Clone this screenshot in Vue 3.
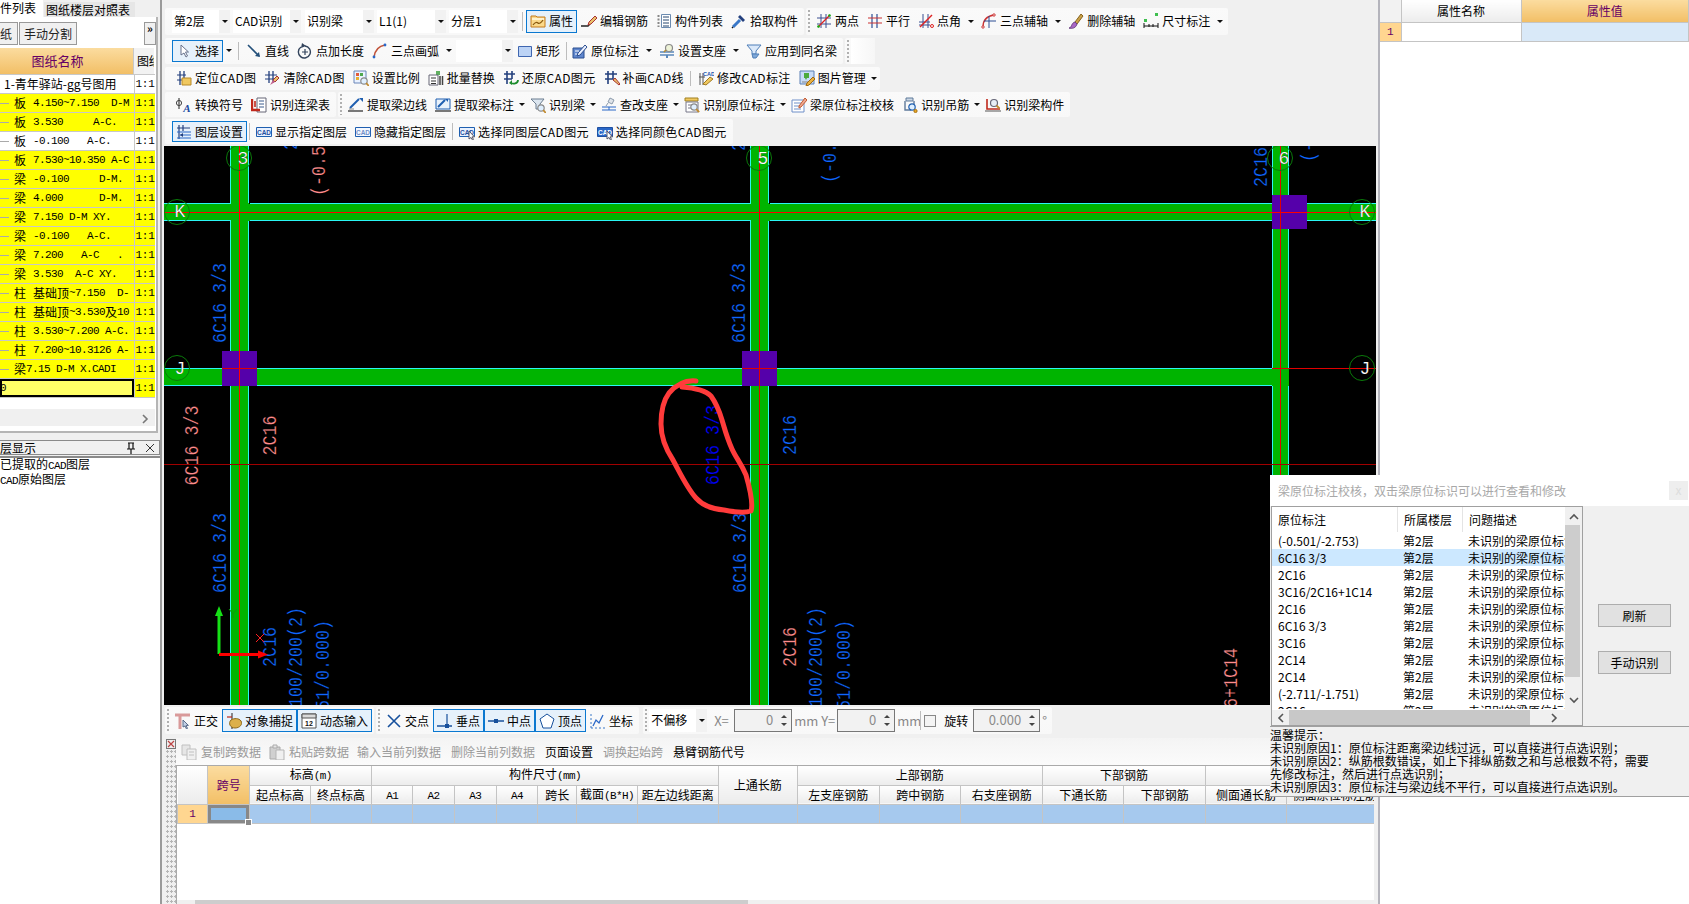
<script setup>
const L = (d, c, w = 1) => `<path d="${d}" fill="none" stroke="${c}" stroke-width="${w}"/>`
const F = (d, f, s = 'none') => `<path d="${d}" fill="${f}" stroke="${s}"/>`
const C = (x, y, r, f, s = 'none', w = 1) => `<circle cx="${x}" cy="${y}" r="${r}" fill="${f}" stroke="${s}" stroke-width="${w}"/>`
const cadBox = (bg, fg, bd) => F('M0.5 3.5h15v9h-15z', bg, bd) + `<text x="8" y="10.5" text-anchor="middle" font-size="6.5" font-weight="700" font-family="Liberation Sans,sans-serif" fill="${fg}">CAD</text>`
const mag = (x = 10, y = 10) => C(x, y, 3.2, '#dfefff', '#8a8a8a', 1.2) + L(`M${x + 2.2} ${y + 2.2}l3 3`, '#c08a30', 1.8)
const icons = {
  attr: F('M1 3h5l1 1h8v10H1z', '#fbd98a', '#c47a1c') + F('M2 5h12v2H2z', '#fff3cf') + L('M3 12c2-3 4-3 5-2s3 0 5-3', '#8a5a10', 1.3),
  edit: L('M0 13h7l2-2', '#222', 1.4) + F('M8 9l6-6 2 2-6 6-3 1z', '#e9c16b', '#a33'),
  list: L('M2.5 2v12', '#888', 2).replace('/>', ' stroke-dasharray="2 1.5"/>') + F('M5.5 1.5h9v13h-9z', '#fff', '#6b8bb0') + L('M7 4h6M7 7h6M7 10h6M7 13h6', '#27476e'),
  pick: L('M2 14l7-7', '#3a78c8', 3) + F('M9 2l5 5-2 2-5-5z', '#24407e') + L('M1 15l1-1', '#111', 1.5),
  two: L('M5 1v14M10 1v14M1 5h14M1 11h14', '#3a4f90') + L('M2 14L14 2', '#d22', 1.3) + C(2.5, 13.5, 1.3, '#1a1') + C(13.5, 2.5, 1.3, '#1a1'),
  par: L('M5 1v14M10 1v14', '#2c4f94', 1.2) + L('M1 5h14M1 10h14', '#c33', 1.2),
  ang: L('M5 1v14M10 1v14M1 9h11M1 12h11', '#3a4f90') + L('M2 14L14 2', '#d22', 1.4) + C(14, 13, 1.5, 'none', '#d22'),
  arc3: L('M2 14C2 7 6 3 13 2', '#c33', 1.4) + L('M8 3v12M3 8h12', '#2c4f94') + C(2, 14, 1.2, '#fff', '#c33') + C(13, 2, 1.2, '#fff', '#c33'),
  del: F('M7 9l6-8 2 2-6 8z', '#c9a24a', '#87631c') + F('M1 15c3 0 2-5 6-6l2 2c-1 4-5 5-8 4z', '#a966c6', '#6a4080'),
  dim: F('M1 6h3v3H1zM12 0h3v3h-3z', '#3fbf4f') + L('M1 10v5M15 10v5M1 13h14', '#111') + L('M6 11v3M10 11v3', '#111'),
  sel: F('M5 2v10l3-2 2 4 1.5-1-2-4h3z', '#fff', '#66708a'),
  line: L('M2 2l11 11', '#24507a', 1.6) + F('M14 14l-5-1 4-4z', '#24507a'),
  len: L('M4 4a6 6 0 1 0 4-1', '#33445c', 1.4) + L('M8 6v6M5 9h6', '#33445c', 1.2) + F('M5 0l4 3-5 2z', '#33445c'),
  arc: L('M2 14C3 7 7 3 13 2', '#c2543a', 1.6) + C(2, 14, 1.4, '#2a68c8') + C(13, 2, 1.4, '#2a68c8'),
  rect: F('M1.5 3.5h13v10h-13z', '#bcd3f5', '#3f66b0'),
  orig: F('M1 5h11v10H1z', '#5f86cd', '#2b4e90') + F('M6 10l7-8 2 2-7 8-3 1z', '#eaf0ff', '#2b4e90') + L('M3 8h4M3 11h2', '#fff'),
  sup: L('M1 9h14M1 12h14', '#5a88bb', 1.5) + L('M8 12v3', '#5a88bb', 2) + C(10, 5, 3.5, '#eef3d8', '#8a8a8a', 1.2) + L('M7 7l-2 2', '#b58a30', 1.6),
  same: F('M1 2h14l-5 6v3H6V8z', '#dbe9fa', '#4f7fb8') + F('M6 11h7l-3 4H7z', '#7fa8d8', '#4f7fb8'),
  locate: L('M4 1v14M8 1v14', '#24407e', 1.3) + L('M1 5h9M1 10h9', '#24407e') + F('M6 8h9v7H6z', '#f0c860', '#b88a28'),
  clear: L('M5 1v12M9 1v12', '#24407e', 1.3) + L('M1 5h12M1 9h12', '#24407e') + F('M9 10l4-4 2 2-4 4z', '#e9c16b', '#a33') + F('M6 15l3-5 2 2z', '#c0608c'),
  scale: F('M1 1h12v12H1z', '#eaf2ff', '#6a86b8') + F('M3 3h3v3H3z', '#e25c3c') + F('M7 3h3v3H7z', '#50a850') + F('M3 7h3v3H3z', '#e8b030') + mag(11, 11),
  batch: F('M8 1h4v4H8z', '#60b060') + F('M1 5h9v10H1z', '#fff', '#667') + L('M3 8h5M3 11h5M3 13.5h5', '#333') + L('M12 6v9M14.5 6v9', '#444', 1.5),
  restore: L('M4 1v13M9 1v8', '#24407e', 1.6) + L('M1 4h11M1 9h8', '#24407e', 1.3) + L('M15 10c0 4-5 4-7 3', '#1c8c2c', 1.8) + F('M6 13l3-3v5z', '#1c8c2c'),
  repair: L('M4 1v13M9 1v8', '#24407e', 1.6) + L('M1 4h12M1 9h8', '#24407e', 1.3) + F('M9 10l2-2 5 6-1 1z', '#e9c16b', '#a33'),
  modcad: L('M2 3v12M5 3v12', '#555') + L('M1 7h6', '#555') + `<text x="11" y="6" text-anchor="middle" font-size="5.5" font-weight="700" font-family="Liberation Sans,sans-serif" fill="#1a56b0">CAD</text>` + F('M5 14l7-7 3 2-7 6z', '#f0c860', '#a07a20'),
  image: F('M1 1h14v13H1z', '#c9dcf7', '#5c80b5') + F('M5 3h5v5H8l-1 2-1-2H5z', '#4caa3c') + L('M3 12h7', '#888') + F('M8 13l6-6 2 2-6 6-3 1z', '#e9b040', '#a06a10'),
  conv: L('M3 1v11', '#444', 1.2) + C(3, 6, 2.6, 'none', '#444') + `<text x="11" y="15" text-anchor="middle" font-size="11" font-style="italic" font-weight="700" font-family="Liberation Serif,serif" fill="#1c4aa0">A</text>`,
  lian: F('M6 1h9v14H6z', '#fff', '#667') + L('M8 4h5M8 7h5M8 10h5', '#3a5a8c') + L('M1 2v11h8', '#c0281c', 2.4) + L('M4 4v6', '#c0281c', 1.6),
  edge: L('M0 14h15', '#222', 1.2) + L('M2 11l9-9', '#1f5fb0', 2) + F('M11 1h4v4z', '#1f5fb0') + L('M1 12h5', '#888'),
  mark: F('M1 2h14v10H1z', '#eaf2fb', '#1f5fb0') + L('M3 10l7-7', '#1f5fb0', 2) + L('M0 14h16', '#222', 1.2) + F('M10 2h3v3z', '#1f5fb0'),
  beam: F('M1 2h13l-4 5v5H6V7z', '#dce6f0', '#6b7d90') + mag(11, 11),
  check: F('M9 1l4 2-2 4-4-2z', '#dfe4ea', '#8a99aa') + L('M7 6l-2 3', '#8a99aa') + L('M1 10h14M1 13h14', '#2a68c8', 1.2) + L('M8 10v3', '#2a68c8'),
  yuan: F('M1 1h13v3H1z', '#f0c860', '#a08020') + F('M2 5h12v10H2z', '#fff', '#778') + L('M4 8h5M4 11h3', '#778') + mag(10, 10),
  verify: F('M1 3h12v12H1z', '#fff', '#6f8fc8') + L('M3 6h7M3 9h7M3 12h7', '#6f8fc8') + F('M8 9l6-8 2 2-6 7-2 1z', '#f0a890', '#c05a30'),
  hang: F('M4 1h7v3H4z', '#cbd7e5', '#5f7a9a') + L('M3 4v9h6M12 4v3', '#5f7a9a', 1.4) + C(10, 10, 3.2, '#dff0ff', '#1f5fb0', 1.2) + C(13.5, 14, 1.6, '#e8a820', '#a87010'),
  shape: L('M2 2v10h13', '#c0281c', 1.6) + L('M0 14h16', '#555') + C(9, 6, 3.5, '#e8eef5', '#667', 1.2) + L('M11.5 8.5l3 3', '#c08a30', 1.8),
  layer: L('M3 1v14M7 1v6', '#24407e', 1.2) + L('M1 4h13', '#24407e') + L('M1 8h14M4 11h11M1 14h14', '#2a68c8', 1.2) + F('M7 9l-3 2 3 2z', '#24407e'),
  show: cadBox('#e8f1ff', '#1f4fa0', '#1f5fb0'),
  hide: cadBox('#f4f8ff', '#6f8fc8', '#1f5fb0'),
  sameL: cadBox('#e8f1ff', '#1f4fa0', '#1f5fb0') + F('M10 7v8l2-1.5 1.5 2.5 1-.6-1.5-2.5h2.5z', '#fff', '#556'),
  sameC: cadBox('#2a68c8', '#fff', '#1f4fa0') + F('M10 7v8l2-1.5 1.5 2.5 1-.6-1.5-2.5h2.5z', '#fff', '#556'),
  ortho: L('M0 2h15', '#d99a9a', 3) + L('M5 2v14', '#d99a9a', 3) + F('M8 7v7l2-1 1.5 3 1-.6-1.5-3h2.4z', '#c4d2e8', '#5a6a88'),
  snap: L('M6 0v16', '#444', 1.2) + L('M1 4h5', '#c0281c', 1.2) + F('M5 7c3-2 8-2 10 1s-1 7-6 7-7-5-4-8z', '#dcb04a', '#8e6a1e'),
  input: F('M1 1h14v14H1z', '#fff', '#555') + F('M1 1h14v4H1z', '#d9d9d9', '#555') + `<text x="8" y="13" text-anchor="middle" font-size="7" font-weight="700" font-family="Liberation Sans,sans-serif" fill="#111">12</text>`,
  cross: L('M2 2l12 12M14 2L2 14', '#17509c', 1.6),
  foot: L('M0 13h15', '#17509c', 1.5) + L('M10 1v12', '#17509c', 1.2) + F('M8 11h4v4H8z', '#17509c'),
  mid: L('M0 8h16', '#17509c', 1.5) + F('M6 6h4v4H6z', '#17509c'),
  vert: F('M8 1l7 5-3 9H4L1 6z', '#fff', '#17509c'),
  coord: L('M1 15V1M1 15h14', '#3a78c8').replace('/>', ' stroke-dasharray="2 2"/>') + L('M3 13l3-6 3 3 4-8', '#2a68c8', 1.3),
  copy: F('M1 1h8v10H1z', '#e6e6e6', '#c0c0c0') + F('M6 5h9v11H6z', '#f0f0f0', '#c0c0c0') + L('M8 8h5M8 11h5', '#c0c0c0'),
  paste: F('M1 3h10v12H1z', '#d0d0d0', '#aaa') + F('M4 1h4v3H4z', '#e6e6e6', '#aaa') + F('M7 6h8v10H7z', '#f0f0f0', '#b5b5b5')
}
const b = (ic, t, o = {}) => ({ k: 'b', ic, t, ...o })
const sel = (t, w) => ({ k: 's', t, w })
const sep = (w = 7) => ({ k: 'p', w })
const grip = { k: 'g' }
const rows = [
  [
    { pl: 7, items: [sel('第2层', 58), { k: 'x', w: 3 }, sel('CAD识别', 68), { k: 'x', w: 4 }, sel('识别梁', 69), { k: 'x', w: 3 }, sel('L1(1)', 69), { k: 'x', w: 3 }, sel('分层1', 69), sep(8), b('attr', '属性', { on: 1 }), b('edit', '编辑钢筋'), b('list', '构件列表'), b('pick', '拾取构件')] },
    { pl: 1, items: [grip, b('two', '两点'), b('par', '平行'), b('ang', '点角', { a: 12 }), b('arc3', '三点辅轴', { a: 12 }), b('del', '删除辅轴'), b('dim', '尺寸标注', { a: 12 })] }
  ],
  [
    { pl: 7, items: [b('sel', '选择', { on: 1, a: 12 }), sep(7), b('line', '直线'), b('len', '点加长度'), b('arc', '三点画弧', { a: 12 }), { k: 'x', w: 1 }, sel('', 57), b('rect', '矩形'), sep(4), b('orig', '原位标注', { a: 12 }), b('sup', '设置支座', { a: 12 }), b('same', '应用到同名梁')] },
    { pl: 1, blank: 1, items: [grip] }
  ],
  [
    { pl: 7, items: [b('locate', '定位CAD图'), b('clear', '清除CAD图'), b('scale', '设置比例'), b('batch', '批量替换'), b('restore', '还原CAD图元'), b('repair', '补画CAD线'), sep(6), b('modcad', '修改CAD标注'), b('image', '图片管理', { a: 8 })] }
  ],
  [
    { pl: 7, items: [b('conv', '转换符号'), b('lian', '识别连梁表')] },
    { pl: 1, items: [grip, b('edge', '提取梁边线'), b('mark', '提取梁标注', { a: 8 }), b('beam', '识别梁', { a: 8 }), b('check', '查改支座', { a: 8 }), b('yuan', '识别原位标注', { a: 8 }), b('verify', '梁原位标注校核'), b('hang', '识别吊筋', { a: 8 }), b('shape', '识别梁构件')] }
  ],
  [
    { pl: 7, items: [b('layer', '图层设置', { on: 1 }), sep(5), b('show', '显示指定图层'), b('hide', '隐藏指定图层'), sep(5), b('sameL', '选择同图层CAD图元'), b('sameC', '选择同颜色CAD图元')] }
  ]
]
const snapStrips = [
  { pl: 1, items: [grip, b('ortho', '正交'), b('snap', '对象捕捉', { on: 1 }), b('input', '动态输入', { on: 1 })] },
  { pl: 1, items: [grip, b('cross', '交点'), b('foot', '垂点', { on: 1 }), b('mid', '中点', { on: 1 }), b('vert', '顶点', { on: 1 }), b('coord', '坐标')] },
  { pl: 1, items: [grip, sel('不偏移', 58), { k: 'l', t: 'X=', w: 27, pad: 1 }, { k: 'n', t: '0', w: 58 }, { k: 'l', t: 'mm', w: 27 }, { k: 'l', t: 'Y=', w: 18 }, { k: 'n', t: '0', w: 58 }, { k: 'l', t: 'mm', w: 25 }, { k: 'c' }, { k: 'l', t: '旋转', w: 37, dark: 1 }, { k: 'n', t: '0.000', w: 67 }, { k: 'l', t: '°', w: 10 }] }
]
const layerTree = [
  ['板', '4.150~7.150  D-M', 1], ['板', '3.530     A-C.', 1], ['板', '-0.100   A-C.', 0], ['板', '7.530~10.350 A-C', 1],
  ['梁', '-0.100     D-M.', 1], ['梁', '4.000      D-M.', 1], ['梁', '7.150 D-M XY.', 1], ['梁', '-0.100   A-C.', 1],
  ['梁', '7.200   A-C   .', 1], ['梁', '3.530  A-C XY.', 1], ['柱', '基础顶~7.150  D-', 1], ['柱', '基础顶~3.530及10', 1],
  ['柱', '3.530~7.200 A-C.', 1], ['柱', '7.200~10.3126 A-', 1], ['梁', '7.15 D-M X.CADI', 1, 1]
]
const parts = (s) => s.split(/([\u4e00-\u9fa5]+)/).filter(Boolean)
const isZh = (s) => /[\u4e00-\u9fa5]/.test(s)
const hasCad = (s) => s.includes('CAD')
const colW = [30, 42, 60, 61, 41, 41, 42, 41, 39, 60, 81, 78, 82, 81, 81, 81, 81, 81, 95]
const sub1 = ['起点标高', '终点标高', 'A1', 'A2', 'A3', 'A4', '跨长', '截面(B*H)', '距左边线距离']
const sub2 = ['左支座钢筋', '跨中钢筋', '右支座钢筋', '下通长筋', '下部钢筋', '侧面通长筋', '侧面原位标注筋']
const dlgRows = ['(-0.501/-2.753)', '6C16 3/3', '2C16', '3C16/2C16+1C14', '2C16', '6C16 3/3', '3C16', '2C14', '2C14', '(-2.711/-1.751)', '2C16']
const hints = ['温馨提示：', '未识别原因1：原位标注距离梁边线过远，可以直接进行点选识别；', '未识别原因2：纵筋根数错误，如上下排纵筋数之和与总根数不符，需要', '先修改标注，然后进行点选识别；', '未识别原因3：原位标注与梁边线不平行，可以直接进行点选识别。']
const blue = '#0f66ff'
const red = '#ff8c8c'
const cadTexts = [
  ['6C16 3/3', 226, 343, blue], ['6C16 3/3', 226, 593, blue], ['6C16 3/3', 745, 343, blue], ['6C16 3/3', 746, 593, blue],
  ['2C16', 275.6, 667, blue], ['2C16', 796, 455, blue], ['2C16', 1267, 187, blue], ['2C16', 297, 150, blue], ['2C16', 745, 151, blue],
  ['100/200(2)', 301.6, 707, blue], ['51/0.000)', 329, 710, blue], ['100/200(2)', 822, 707, blue], ['51/0.000)', 850, 710, blue],
  ['(-0.501/-2.753)', 836, 183, blue], ['(-2.711/-1.751)', 1315, 162, blue],
  ['(-0.501/-2.753)', 324.5, 196, red], ['6C16 3/3', 198, 485.5, red], ['2C16', 275.6, 455.6, red], ['2C16', 795.5, 667, red],
  ['3C16/2C16+1C14', 1236.5, 788, red], ['6C16 3/3', 719, 485, '#0000ff']
]
const bubbles = [[239, 158, '3', 243, 159], [759, 158, '5', 763, 159], [1280, 158, '6', 1284, 159], [177, 212, 'K', 180, 212], [1362, 212, 'K', 1365, 212], [177, 368, 'J', 180, 369], [1362, 368, 'J', 1365, 369]]
const greens = [[164, 203.5, 1212, 17], [164, 368.5, 1125, 17], [231, 146, 18, 559], [751, 146, 18, 559], [1272, 146, 17, 559]]
const purples = [[222, 351, 35, 35], [742, 351, 35, 35], [1272, 195, 35, 34]]
const cyan = 'M164 203.5H230.5M249.5 203.5H750.5M769.5 203.5H1272M1307 203.5H1376M164 220.5H230.5M249.5 220.5H750.5M769.5 220.5H1272M1307 220.5H1376M164 368.5H222M257 368.5H742M777 368.5H1272M164 385.5H222M257 385.5H742M777 385.5H1272M230.5 146V203M230.5 221V351M230.5 386V705M248.5 146V203M248.5 221V351M248.5 386V705M750.5 146V203M750.5 221V351M750.5 386V705M768.5 146V203M768.5 221V351M768.5 386V705M1272.5 146V195M1272.5 229V368M1272.5 386V705M1288.5 146V195M1288.5 229V368M1288.5 386V705'
const scribble = 'M696 381C686 380 677 384 669 393C663 401 661 412 661 424C661 437 665 448 673 460C680 473 687 488 696 498C703 506 712 509 724 510C734 512 745 513 751 511C753 505 752 496 746 475C741 463 736 458 732 449C727 438 725 430 722 420C719 410 716 403 711 396C705 390 695 388 682 387'
</script>

<template>
  <div class="app">
    <aside class="left">
      <div class="tabs">
        <span class="tab on">件列表</span>
        <span class="tab">图纸楼层对照表</span>
      </div>
      <div class="leftPanel">
        <div class="leftBtns">
          <span class="lbtn first">纸</span>
          <span class="lbtn">手动分割</span>
          <span class="more">»</span>
        </div>
        <div class="ltable">
          <div class="lrow lhead">
            <span class="c1 orange">图纸名称</span>
            <span class="c2 clip">图纸</span>
          </div>
          <div class="lrow">
            <span class="c1 rowtext white"><i class="indent0"></i><span class="zh">1-青年驿站-gg号图用</span></span>
            <span class="c2 white">1:1</span>
          </div>
          <div v-for="(r, i) in layerTree" :key="i" class="lrow">
            <span class="c1 rowtext" :class="r[2] ? 'yellow' : 'white'">
              <i class="dash"></i><span class="zh tkind" :class="{ tight: r[3] }">{{ r[0] }}</span>
              <template v-for="(p, j) in parts(r[1])" :key="j"><span :class="isZh(p) ? 'zh' : 'mono'">{{ p }}</span></template>
            </span>
            <span class="c2" :class="r[2] ? 'yellow' : 'white'">1:1</span>
          </div>
          <div class="lrow">
            <span class="c1 rowtext selrow"><span class="mono">0</span></span>
            <span class="c2 yellow">1:1</span>
          </div>
          <div class="lscroll"><svg width="10" height="10" viewBox="0 0 10 10"><path d="M3 1l4 4-4 4" fill="none" stroke="#777" stroke-width="1.6"/></svg></div>
        </div>
      </div>
      <div class="layerHead">
        <span>层显示</span>
        <span class="hicons">
          <svg width="10" height="12" viewBox="0 0 10 12"><path d="M2 1h6M3 1v6h4V1M1 7h8M5 7v5" fill="none" stroke="#111" stroke-width="1.2"/></svg>
          <svg width="10" height="10" viewBox="0 0 10 10"><path d="M1 1l8 8M9 1l-8 8" stroke="#333"/></svg>
        </span>
      </div>
      <div class="layerBody">
        <div class="lline">已提取的<span class="mono">CAD</span>图层</div>
        <div class="lline"><span class="mono">CAD</span>原始图层</div>
      </div>
    </aside>

    <main class="center">
      <div class="toolbars">
        <div v-for="(row, ri) in rows" :key="ri" class="row">
          <div v-for="(s, si) in row" :key="si" class="strip" :style="{ paddingLeft: s.pl + 'px' }">
            <template v-for="(it, ii) in s.items" :key="ii">
              <span v-if="it.k === 'x'" :style="{ width: it.w + 'px' }"></span>
              <span v-else-if="it.k === 'g'" class="grip"></span>
              <span v-else-if="it.k === 'p'" class="sepw" :style="{ width: it.w + 'px' }"><i></i></span>
              <span v-else-if="it.k === 's'" class="combo" :style="{ width: it.w + 'px' }"><em>{{ it.t }}</em><b class="drop"><u class="tri"></u></b></span>
              <template v-else>
                <span class="btn" :class="{ on: it.on }">
                  <svg class="ic" viewBox="0 0 16 16" v-html="icons[it.ic]"></svg>
                  <span :class="{ cadw: hasCad(it.t) }">{{ it.t }}</span>
                </span>
                <span v-if="it.a" class="arrow" :style="{ width: it.a + 'px' }"><u class="tri"></u></span>
              </template>
            </template>
            <span v-if="s.blank" class="blank"></span>
          </div>
        </div>
      </div>

      <div class="canvas">
        <svg width="1212" height="559" viewBox="164 146 1212 559">
          <rect x="164" y="146" width="1212" height="559" fill="#000" />
          <g shape-rendering="crispEdges">
            <rect v-for="(g, i) in greens" :key="i" :x="g[0]" :y="g[1]" :width="g[2]" :height="g[3]" fill="#00b400" />
            <path :d="cyan" fill="none" stroke="#2af5f5" />
          </g>
          <text v-for="(t, i) in cadTexts" :key="'t' + i" class="cad" :fill="t[3]" :textLength="t[0].length * 10" lengthAdjust="spacingAndGlyphs" :transform="`translate(${t[1]} ${t[2]}) rotate(-90)`">{{ t[0] }}</text>
          <g shape-rendering="crispEdges">
            <rect v-for="(p, i) in purples" :key="'p' + i" :x="p[0]" :y="p[1]" :width="p[2]" :height="p[3]" fill="#5500aa" />
            <path d="M164 212.5H1376M239.5 146V705" stroke="#ff0000" fill="none" />
            <path d="M759.5 146V705M1280.5 146V705M222 368.5H257M742 368.5H777M1272 368.5H1376" stroke="#e00000" fill="none" />
            <path d="M164 464.5H1376" stroke="#a00000" fill="none" />
          </g>
          <g v-for="(c, i) in bubbles" :key="'b' + i">
            <circle :cx="c[0]" :cy="c[1]" r="12.5" fill="none" stroke="#0a7a0a" />
            <text class="axis" :x="c[3]" :y="c[4]" text-anchor="middle" dominant-baseline="central">{{ c[2] }}</text>
          </g>
          <path :d="scribble" fill="none" stroke="#ff3b3b" stroke-width="5" stroke-linecap="round" stroke-linejoin="round" />
          <path d="M219 654V616" stroke="#16e016" stroke-width="3" />
          <path d="M219 606l-4 10h8z" fill="#16e016" />
          <path d="M219 654.5H258" stroke="#ff0000" stroke-width="3" />
          <path d="M268 654.5l-10-4v8z" fill="#ff0000" />
          <path d="M229 609l4 5v4M237 609l-4 5" stroke="#0d9a0d" fill="none" />
          <path d="M256 634l8 8M264 634l-8 8" stroke="#ff2020" fill="none" />
        </svg>
      </div>

      <div class="snapbar">
        <div v-for="(s, si) in snapStrips" :key="si" class="strip" :style="{ paddingLeft: s.pl + 'px' }">
          <template v-for="(it, ii) in s.items" :key="ii">
            <span v-if="it.k === 'g'" class="grip"></span>
            <span v-else-if="it.k === 's'" class="combo" :style="{ width: it.w + 'px' }"><em>{{ it.t }}</em><b class="drop"><u class="tri"></u></b></span>
            <span v-else-if="it.k === 'l'" class="lbl" :class="{ dark: it.dark, pad: it.pad }" :style="{ width: it.w + 'px' }">{{ it.t }}</span>
            <span v-else-if="it.k === 'n'" class="num" :style="{ width: it.w + 'px' }">
              <em>{{ it.t }}</em>
              <span class="spin"><u class="up"></u><u class="dn"></u></span>
            </span>
            <span v-else-if="it.k === 'c'" class="cbwrap"><i class="cb"></i></span>
            <span v-else class="btn" :class="{ on: it.on }">
              <svg class="ic" viewBox="0 0 16 16" v-html="icons[it.ic]"></svg>
              <span>{{ it.t }}</span>
            </span>
          </template>
        </div>
      </div>

      <div class="bottom">
        <div class="gutter">
          <svg width="10" height="10" viewBox="0 0 10 10"><rect x=".5" y=".5" width="9" height="9" fill="#eee" stroke="#777" /><path d="M2 2l6 6M8 2l-6 6" stroke="#b44" stroke-width="1.2" /></svg>
          <div class="dots"></div>
        </div>
        <div class="gridArea">
          <div class="gridBar">
            <span class="gi dis"><svg class="ic" viewBox="0 0 16 16" v-html="icons.copy"></svg>复制跨数据</span>
            <span class="gi dis"><svg class="ic" viewBox="0 0 16 16" v-html="icons.paste"></svg>粘贴跨数据</span>
            <span class="gi dis">输入当前列数据</span>
            <span class="gi dis">删除当前列数据</span>
            <span class="gi">页面设置</span>
            <span class="gi dis">调换起始跨</span>
            <span class="gi">悬臂钢筋代号</span>
          </div>
          <div class="gridWrap">
            <table class="grid">
              <colgroup><col v-for="(w, i) in colW" :key="i" :style="{ width: w + 'px' }"></colgroup>
              <tbody>
                <tr>
                  <th rowspan="2"></th>
                  <th rowspan="2" class="kuahao">跨号</th>
                  <th colspan="2">标高<span class="mono">(m)</span></th>
                  <th colspan="7">构件尺寸<span class="mono">(mm)</span></th>
                  <th rowspan="2">上通长筋</th>
                  <th colspan="3">上部钢筋</th>
                  <th colspan="2">下部钢筋</th>
                  <th colspan="2"></th>
                </tr>
                <tr>
                  <th v-for="t in sub1" :key="t"><template v-for="(p, j) in parts(t)" :key="j"><span :class="isZh(p) ? '' : 'mono'">{{ p }}</span></template></th>
                  <th v-for="t in sub2" :key="t">{{ t }}</th>
                </tr>
                <tr class="data">
                  <td class="rh">1</td>
                  <td class="cur"><i></i></td>
                  <td v-for="n in 17" :key="n"></td>
                </tr>
              </tbody>
            </table>
            <div class="hbar"><i></i></div>
          </div>
        </div>
      </div>
    </main>

    <section class="right">
      <table class="pgrid">
        <colgroup><col class="p0"><col class="p1"><col></colgroup>
        <tbody>
          <tr><th></th><th>属性名称</th><th class="kuahao">属性值</th></tr>
          <tr><td class="rh">1</td><td></td><td class="pval"></td></tr>
        </tbody>
      </table>
    </section>

    <div class="dialog">
      <div class="dtitle">
        <span>梁原位标注校核，双击梁原位标识可以进行查看和修改</span>
        <span class="dclose">x</span>
      </div>
      <div class="dbody">
        <div class="dlist">
          <div class="dmain">
            <div class="dhead"><span class="d1">原位标注</span><span class="d2">所属楼层</span><span class="d3">问题描述</span></div>
            <div class="drows">
              <div v-for="(r, i) in dlgRows" :key="i" class="drow" :class="{ picked: i === 1 }">
                <span class="d1">{{ r }}</span><span class="d2">第2层</span><span class="d3">未识别的梁原位标注</span>
              </div>
            </div>
          </div>
          <div class="vsb">
            <svg width="10" height="8" viewBox="0 0 10 8"><path d="M1 6l4-4 4 4" fill="none" stroke="#555" stroke-width="1.6" /></svg>
            <i></i>
            <svg width="10" height="8" viewBox="0 0 10 8"><path d="M1 2l4 4 4-4" fill="none" stroke="#555" stroke-width="1.6" /></svg>
          </div>
          <div class="hsb">
            <svg width="8" height="10" viewBox="0 0 8 10"><path d="M6 1L2 5l4 4" fill="none" stroke="#555" stroke-width="1.6" /></svg>
            <i></i>
            <svg width="8" height="10" viewBox="0 0 8 10"><path d="M2 1l4 4-4 4" fill="none" stroke="#555" stroke-width="1.6" /></svg>
          </div>
        </div>
        <div class="dside">
          <button class="dbtn">刷新</button>
          <button class="dbtn">手动识别</button>
        </div>
      </div>
      <div class="dhint"><div v-for="h in hints" :key="h">{{ h }}</div></div>
    </div>
  </div>
</template>

<style>
html, body { margin: 0; padding: 0; background: #f0f0f0; overflow: hidden; }
</style>

<style scoped>
.app { position: relative; width: 1689px; height: 904px; display: flex; overflow: hidden; background: #f0f0f0; font: 12px/14px "Noto Sans CJK SC", sans-serif; color: #000; }
i, em, u, b { font-style: normal; text-decoration: none; font-weight: normal; }
.left { width: 162px; flex: none; box-sizing: border-box; display: flex; flex-direction: column; border-right: 2px solid #9a9a9a; }
.tabs { height: 17px; display: flex; align-items: flex-end; }
.tab { height: 15px; width: 91px; margin-left: 1px; padding-left: 2px; background: #e6e6e6; text-align: left; box-sizing: border-box; font-size: 12px; line-height: 15px; white-space: nowrap; overflow: hidden; }
.tab.on { width: 43px; height: 17px; margin: 0; padding: 0; background: #fff; }
.leftPanel { width: 158px; height: 416px; box-sizing: border-box; background: #fff; border-right: 2px solid #b5b5b5; border-bottom: 2px solid #b5b5b5; position: relative; }
.leftBtns { height: 31px; display: flex; padding-top: 5px; box-sizing: border-box; }
.lbtn { height: 23px; width: 58px; line-height: 22px; text-align: center; background: #f0f0f0; border: 1px solid #999; box-sizing: border-box; color: #222; }
.lbtn.first { width: 18px; margin-right: 1px; border-left: 0; text-align: left; }
.more { position: absolute; left: 144px; top: 5px; width: 12px; height: 23px; background: #f0f0f0; border: 1px solid #999; box-sizing: border-box; font-size: 11px; line-height: 11px; text-align: center; font-weight: 700; }
.ltable { width: 155px; }
.lrow { display: flex; height: 19px; border-bottom: 1px solid #c8c8c8; box-sizing: border-box; }
.lhead { height: 27px; }
.c1 { width: 134px; flex: none; border-right: 1px solid #c8c8c8; white-space: pre; overflow: hidden; display: flex; align-items: center; }
.c2 { width: 20px; flex: none; overflow: hidden; white-space: nowrap; text-align: center; line-height: 18px; font-family: "Liberation Mono", monospace; font-size: 11px; letter-spacing: -.3px; }
.clip { font-family: "Noto Sans CJK SC", sans-serif; font-size: 12px; line-height: 26px; text-align: left; padding-left: 3px; box-sizing: border-box; background: #f2f2f2; }
.orange { background: linear-gradient(#fbdc9f, #f2bf66); color: #660066; justify-content: center; padding-right: 18px; box-sizing: border-box; font-size: 13px; }
.white { background: #fff; }
.yellow { background: #ffff00; }
.zh { font-family: "Noto Sans CJK SC", sans-serif; font-size: 12px; }
.mono { font-family: "Liberation Mono", monospace; font-size: 11px; letter-spacing: -.6px; }
.rowtext { padding-left: 0; }
.indent0 { width: 4px; }
.dash { width: 9px; height: 1px; background: #aaa; margin-right: 5px; flex: none; }
.tkind { margin-right: 7px; }
.tkind.tight { margin-right: 0; }
.selrow { background: #ffff66; box-shadow: inset 0 0 0 2px #000; position: relative; }
.lscroll { height: 17px; margin-top: 11px; background: #f0f0f0; text-align: right; padding-right: 5px; box-sizing: border-box; padding-top: 3px; }
.layerHead { margin-top: 7px; height: 15px; width: 160px; box-sizing: border-box; background: #f0f0f0; border: 1px solid #8a8a8a; border-left: 0; display: flex; justify-content: space-between; align-items: center; }
.hicons { display: flex; gap: 9px; padding-right: 4px; align-items: center; }
.layerBody { flex: 1; background: #fff; border-top: 2px solid #8a8a8a; margin-top: 1px; }
.lline { height: 14.5px; line-height: 14px; white-space: nowrap; }
.lline:first-child { margin-top: -1px; }
.lline .mono { font-size: 11px; letter-spacing: -.6px; }

.center { width: 1216px; flex: none; display: flex; flex-direction: column; }
.toolbars { height: 146px; box-sizing: border-box; padding: 8px 0 0 3px; display: flex; flex-direction: column; }
.row { display: flex; gap: 2px; height: 25px; margin-bottom: 2px; }
.row:nth-child(1) { height: 27px; margin-bottom: 3px; }
.row:nth-child(2) { height: 26px; margin-bottom: 3px; }
.row:nth-child(3) { height: 24px; margin-bottom: 2px; }
.strip { display: flex; align-items: stretch; padding: 2px 2px 2px 0; box-sizing: border-box; background: linear-gradient(#fafafa, #f8f8f8); border-radius: 2px; white-space: nowrap; }
.btn { display: flex; align-items: center; gap: 3px; padding: 0 3px; border: 1px solid transparent; box-sizing: border-box; }
.btn.on { border-color: #0a78d0; background: #e6f1fb; }
.cadw { letter-spacing: .36px; }
.ic { width: 16px; height: 16px; flex: none; }
.grip { width: 5px; margin-right: 0; flex: none; background: radial-gradient(circle at 2px 2px, #b0b0b0 1.3px, transparent 1.5px) 0 3px / 4px 4px repeat-y; }
.sepw { display: flex; justify-content: center; flex: none; }
.sepw i { width: 1px; background: #bdbdbd; margin: 2px 0; }
.arrow { display: flex; align-items: center; justify-content: center; flex: none; }
.tri { width: 0; height: 0; border-left: 3px solid transparent; border-right: 3px solid transparent; border-top: 3px solid #111; display: block; }
.combo { display: flex; background: #fff; flex: none; box-sizing: border-box; align-items: stretch; }
.combo em { flex: 1; padding-left: 2px; line-height: 22px; overflow: hidden; }
.drop { width: 11px; background: #f2f2f2; display: flex; align-items: center; justify-content: center; }
.blank { width: 24px; background: linear-gradient(90deg, #fff, #f6f6f6); margin: -2px -2px -2px 0; }

.canvas { margin-left: 2px; width: 1212px; height: 559px; flex: none; }
.canvas svg { display: block; }
.cad { font: 20px "Liberation Mono", monospace; stroke: #000; stroke-width: .25px; }
.axis { font: 18px "Liberation Mono", monospace; fill: #fff; stroke: #000; stroke-width: .2px; }

.snapbar { height: 33px; flex: none; box-sizing: border-box; padding: 2px 0 0 3px; display: flex; gap: 2px; }
.snapbar .strip { height: 27px; }
.snapbar .strip:nth-child(3) { margin-left: 2px; }
.lbl { flex: none; color: #888; font-size: 13px; line-height: 23px; padding-left: 2px; box-sizing: border-box; white-space: nowrap; }
.lbl.pad { padding-left: 7px; }
.lbl.dark { color: #000; font-size: 12px; padding-left: 8px; }
.num { flex: none; border: 1px solid #777; box-sizing: border-box; background: #f2f2f2; display: flex; justify-content: flex-end; color: #8a8a8a; font-size: 13px; line-height: 20px; }
.num em { padding-right: 4px; }
.spin { width: 14px; display: flex; flex-direction: column; align-items: center; justify-content: space-around; padding: 3px 0; box-sizing: border-box; }
.up { border: 3px solid transparent; border-top: 0; border-bottom: 3px solid #444; }
.dn { border: 3px solid transparent; border-bottom: 0; border-top: 3px solid #444; }
.cbwrap { display: flex; align-items: center; padding-left: 3px; border-left: 1px solid #bdbdbd; margin: 2px 0; }
.cb { width: 10px; height: 10px; border: 1px solid #888; background: #f4f4f4; display: block; }

.bottom { flex: 1; display: flex; padding-left: 4px; min-height: 0; }
.gutter { width: 10px; flex: none; padding-top: 1px; display: flex; flex-direction: column; gap: 1px; }
.gutter svg { display: block; }
.dots { flex: 1; background: radial-gradient(circle at 1.5px 1.5px, #b5b5b5 1px, transparent 1.2px) 0 0 / 4px 5px; }
.gridArea { width: 1198px; flex: none; display: flex; flex-direction: column; min-width: 0; }
.gridBar { height: 27px; flex: none; display: flex; align-items: center; gap: 8px; padding-left: 5px; background: linear-gradient(#f4f4f4, #fbfbfb); }
.gi { display: flex; align-items: center; gap: 4px; white-space: nowrap; }
.gi:nth-child(n+4) { margin-left: 2px; }
.gi.dis { color: #9a9a9a; }
.gridWrap { flex: 1; position: relative; background: #fff; border-top: 1px solid #aaa; border-left: 1px solid #aaa; overflow: hidden; }
table { border-collapse: collapse; table-layout: fixed; }
.grid { width: 1206px; }
th, td { padding: 0; height: 19px; border: 1px solid #c4c4c4; font-weight: normal; font-size: 12px; line-height: 14px; text-align: center; white-space: nowrap; overflow: hidden; box-sizing: border-box; }
th { background: linear-gradient(#fff, #ececec); }
.kuahao { background: linear-gradient(#fbdc9f, #f2bf66); color: #660066; }
.grid th:first-child { border-left: 0; }
.grid tr:first-child th { border-top: 0; }
.data td { background: #a6c9ee; }
td.rh { background: #ffd690 !important; color: #660066; font-family: "Liberation Mono", monospace; font-size: 11px; }
td.cur { background: #8abbe8; box-shadow: inset 0 0 0 3px #888; position: relative; overflow: visible; }
td.cur i { position: absolute; right: -3px; bottom: -3px; width: 5px; height: 5px; background: #888; border: 1px solid #fff; }
.hbar { position: absolute; left: 0; right: 0; bottom: 0; height: 4px; background: #f0f0f0; }
.hbar i { display: block; margin-left: 18px; width: 553px; height: 4px; background: #cdcdcd; }

.right { flex: 1; background: #fff; border-left: 2px solid #b4b4bc; box-sizing: border-box; margin-left: 0; }
.pgrid { width: 309px; }
.p0 { width: 21px; }
.p1 { width: 120px; }
.pgrid tr:first-child th { height: 22px; border-top: 0; }
.pgrid th:first-child { background: #f2f2f2; border-left: 0; }
.pgrid td.rh { border-left: 0; }
.pval { background: #d9e9f8; }

.dialog { position: absolute; left: 1270px; top: 475px; width: 419px; height: 322px; box-sizing: border-box; background: #f0f0f0; display: flex; flex-direction: column; border-bottom: 1px solid #a0a0a0; }
.dtitle { height: 31px; flex: none; background: #fff; color: #a8a8a8; display: flex; align-items: center; justify-content: space-between; padding-left: 8px; }
.dclose { width: 19px; height: 19px; background: #eee; text-align: center; color: #ddd; line-height: 18px; margin-right: 1px; }
.dbody { height: 221px; flex: none; display: flex; border-bottom: 1px solid #a0a0a0; box-sizing: border-box; }
.dlist { width: 312px; flex: none; box-sizing: border-box; border: 1px solid #a0a0a0; margin-left: 1px; display: grid; grid-template-columns: 293px 1fr; grid-template-rows: 1fr 15px; background: #f0f0f0; }
.dmain { background: #fff; overflow: hidden; min-height: 0; }
.dhead { height: 25px; display: flex; align-items: center; line-height: 25px; }
.dhead span + span { border-left: 1px solid #e4e4e4; }
.drows { height: 177px; overflow: hidden; }
.drow { display: flex; height: 17px; line-height: 17px; }
.picked { background: #cce8ff; }
.d1 { width: 125px; padding-left: 6px; box-sizing: border-box; flex: none; white-space: nowrap; }
.d2 { width: 65px; padding-left: 6px; box-sizing: border-box; flex: none; }
.d3 { flex: 1; padding-left: 6px; white-space: nowrap; overflow: hidden; }
.vsb { display: flex; flex-direction: column; align-items: center; justify-content: space-between; padding: 6px 0; box-sizing: border-box; position: relative; }
.vsb i { position: absolute; left: 0; top: 18px; width: 15px; height: 152px; background: #cdcdcd; }
.hsb { grid-column: 1 / 3; display: flex; align-items: center; justify-content: space-between; padding: 0 24px 0 5px; position: relative; }
.hsb i { position: absolute; left: 17px; top: 0; width: 241px; height: 15px; background: #c8c8c8; }
.dside { flex: 1; display: flex; flex-direction: column; align-items: center; padding: 98px 3px 0 0; gap: 24px; }
.dbtn { width: 73px; height: 23px; background: #e1e1e1; border: 1px solid #adadad; font: 12px/14px "Noto Sans CJK SC", sans-serif; padding: 0; }
.dhint { flex: 1; padding-top: 1px; line-height: 13px; white-space: nowrap; }
</style>
